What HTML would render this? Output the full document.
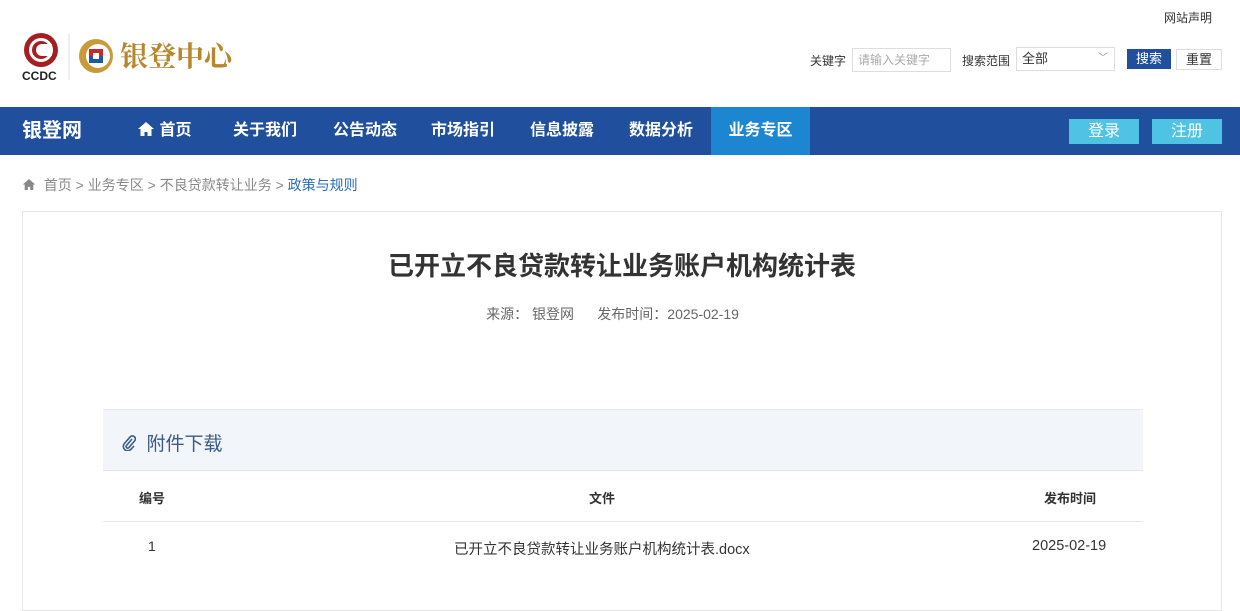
<!DOCTYPE html>
<html><head><meta charset="utf-8"><style>
*{margin:0;padding:0;box-sizing:border-box}
body{width:1240px;height:566px;overflow:hidden;background:#fff;font-family:"Liberation Sans","Noto Sans CJK SC",sans-serif;color:#333;position:relative}
.a{position:absolute}
.nav{top:107px;left:0;width:1240px;height:48px;background:#1f4f9d}
.nav span{position:absolute;top:0;height:48px;line-height:48px;color:#fff;font-size:16px;font-weight:bold}
.btn{position:absolute;top:12px;width:70px;height:25px;background:#4fc3e3;color:#fff;font-size:16px;text-align:center;line-height:25px}
</style></head><body>
<div class="a" style="top:9px;left:1164px;font-size:12px;color:#333">网站声明</div>
<svg class="a" style="left:20px;top:30px" width="230" height="52">
<circle cx="21" cy="20" r="17" fill="#a51e22"/><circle cx="21" cy="20" r="12" fill="#fff"/><circle cx="21" cy="20" r="9" fill="#a51e22"/><circle cx="22" cy="20" r="6" fill="#fff"/><rect x="22" y="14" width="10" height="12" fill="#fff"/>
<text x="2" y="50" font-size="12" font-weight="bold" fill="#222" font-family="Liberation Sans">CCDC</text>
<line x1="49" y1="4" x2="49" y2="50" stroke="#ddd"/>
<circle cx="76" cy="26" r="17" fill="#c99a3a"/><circle cx="78" cy="26" r="12" fill="#fff"/>
<rect x="69" y="19" width="14" height="7" fill="#c8282e"/><rect x="69" y="26" width="14" height="7" fill="#1d5aa5"/><rect x="73" y="23" width="6" height="6" fill="#fff"/>
<text x="100" y="36" font-size="28" fill="#b8862d" font-family="Noto Serif CJK SC,serif" font-weight="bold">银登中心</text>
</svg>
<div class="a" style="top:52px;left:810px;font-size:12px">关键字</div>
<div class="a" style="top:48px;left:852px;width:99px;height:24px;border:1px solid #ddd;font-size:12px;color:#aaa;line-height:22px;padding-left:5px">请输入关键字</div>
<div class="a" style="top:52px;left:962px;font-size:12px">搜索范围</div>
<div class="a" style="top:47px;left:1016px;width:99px;height:24px;border:1px solid #ddd;font-size:13px;line-height:22px;padding-left:5px">全部<span style="position:absolute;right:6px;top:0;color:#999;font-size:10px">﹀</span></div>
<div class="a" style="top:49px;left:1127px;width:44px;height:20px;background:#1f4f9d;color:#fff;font-size:13px;text-align:center;line-height:20px">搜索</div>
<div class="a" style="top:49px;left:1176px;width:46px;height:21px;border:1px solid #ddd;font-size:13px;text-align:center;line-height:19px">重置</div>
<div class="a nav">
<span style="left:22px;font-size:20px">银登网</span>
<span style="left:137px"><svg width="18" height="16" style="vertical-align:-2px" viewBox="0 0 18 16"><path d="M9 1L1 8h2.5v7h4v-4h3v4h4V8H17z" fill="#fff"/></svg> 首页</span>
<span style="left:233px">关于我们</span>
<span style="left:333px">公告动态</span>
<span style="left:431px">市场指引</span>
<span style="left:530px">信息披露</span>
<span style="left:629px">数据分析</span>
<span style="left:711px;width:99px;background:#1d86d1;text-align:center">业务专区</span>
<div class="btn" style="left:1069px">登录</div><div class="btn" style="left:1152px">注册</div>
</div>
<div class="a" style="top:175px;left:22px;font-size:14px;color:#888"><svg width="14" height="13" viewBox="0 0 18 16" style="vertical-align:-1px"><path d="M9 1L1 8h2.5v7h4v-4h3v4h4V8H17z" fill="#888"/></svg>&nbsp; 首页 &gt; 业务专区 &gt; 不良贷款转让业务 &gt; <span style="color:#2a6eb5">政策与规则</span></div>
<div class="a" style="top:211px;left:22px;width:1200px;height:400px;border:1px solid #e6e6e6"></div>
<div class="a" style="top:246px;left:0;width:1244px;text-align:center;font-size:26px;font-weight:bold;color:#333">已开立不良贷款转让业务账户机构统计表</div>
<div class="a" style="top:304px;left:0;width:1225px;text-align:center;font-size:14px;color:#666">来源： 银登网 &nbsp; &nbsp; &nbsp;发布时间：2025-02-19</div>
<div class="a" style="top:409px;left:103px;width:1040px;height:62px;background:#f2f5f9;border-top:1px solid #e6eaf0;border-bottom:1px solid #e3e6ea"></div>
<div class="a" style="top:429px;left:122px;font-size:19px;color:#3b5c85"><svg width="14" height="16" viewBox="0 0 14 16" style="vertical-align:-1px"><path d="M10 4L4.5 10.5a1.6 1.6 0 0 0 2.3 2.2L12.5 6a3 3 0 0 0-4.3-4.2L2.3 8.6a4.4 4.4 0 0 0 6.3 6.1L12 11" stroke="#3b5c85" stroke-width="1.6" fill="none"/></svg>&nbsp; 附件下载</div>
<div class="a" style="top:488px;left:139px;font-size:13px;font-weight:bold">编号</div>
<div class="a" style="top:488px;left:589px;font-size:13px;font-weight:bold">文件</div>
<div class="a" style="top:488px;left:1044px;font-size:13px;font-weight:bold">发布时间</div>
<div class="a" style="top:521px;left:103px;width:1040px;height:1px;background:#e6e6e6"></div>
<div class="a" style="top:538px;left:148px;font-size:14px">1</div>
<div class="a" style="top:538px;left:454px;font-size:14.5px">已开立不良贷款转让业务账户机构统计表.docx</div>
<div class="a" style="top:538px;left:1032px;font-size:14.5px">2025-02-19</div>
</body></html>
